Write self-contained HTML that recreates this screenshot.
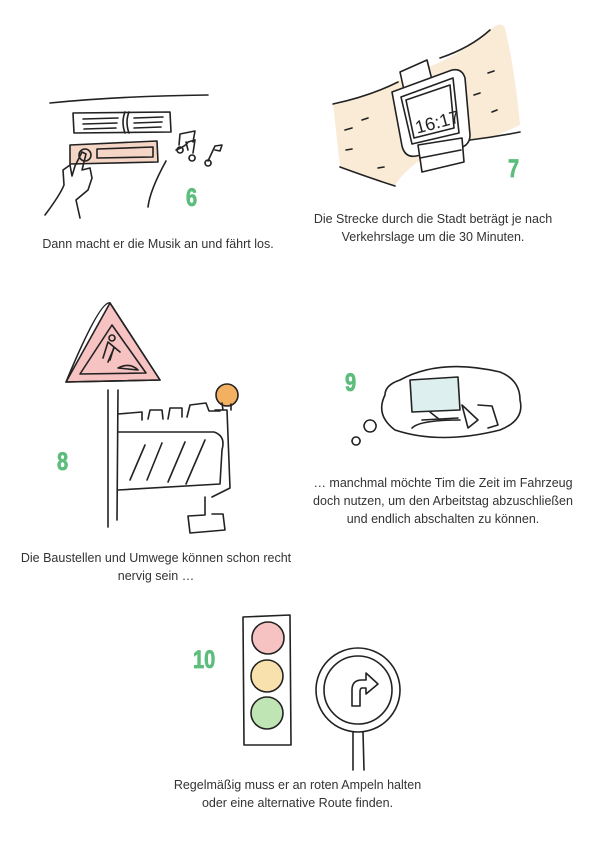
<!DOCTYPE html>
<html><head><meta charset="utf-8"><style>
body{margin:0;background:#fff;}
.p{position:relative;width:595px;height:842px;overflow:hidden;font-family:"Liberation Sans",sans-serif;}
.t{position:absolute;font-size:12.5px;color:#333;text-align:center;line-height:18px;white-space:nowrap;}
svg{position:absolute;left:0;top:0;}
.n{position:absolute;font-family:'Liberation Sans',sans-serif;font-weight:bold;color:#5dbd7c;font-size:25px;transform:scaleX(0.8);transform-origin:left top;-webkit-text-stroke:0.8px #5dbd7c;}
</style></head><body><div class="p">
<svg width="595" height="842" viewBox="0 0 595 842" fill="none" stroke="#222" stroke-width="1.6" stroke-linecap="round" stroke-linejoin="round">
<!-- 6 radio -->
<path d="M50 103 Q120 96 208 95"/>
<path d="M73 113 L170 112 L171 132 L74 133 Z"/>
<path d="M125 112 Q121 122 125 133 M129 112 Q125 122 129 133"/>
<path d="M83 119 L118 118 M83 124 L117 123 M84 129 L116 128 M134 118 L163 117 M134 123 L162 122 M134 128 L161 127"/>
<path d="M70 145 L157 141 L158 162 L70 164 Z" fill="#f5d6c6"/>
<path d="M97 149 L153 147 L153 157 L97 158 Z"/>
<circle cx="85" cy="155" r="6"/>
<path d="M45 215 Q60 195 64 185 L63 170 L70 165 L72 176 L75 166 L82 152 L86 154 L82 170 L90 168 L92 178 L88 190 L76 200 L80 218"/>
<path d="M166 161 Q150 190 148 207"/>
<path d="M176 150 Q186 146 188 142 L195 140 L193 153 M186 142 L188 150 M193 142 L195 131 L180 134 L179 145 M180 147 a3 3 0 1 0 0.1 0 M192 155 a3 3 0 1 0 0.1 0"/>
<path d="M208 161 L215 146 L222 145 L220 151 L215 150 M208 160 a3 3 0 1 0 0.1 0"/>
<!-- 7 watch -->
<path d="M333 104 Q370 96 400 80 L440 62 Q470 48 490 30 Q500 20 505 28 Q515 70 520 125 Q490 140 470 140 L420 160 Q400 175 395 186 Q365 178 340 167 Z" fill="#faebd6" stroke="none"/>
<path d="M333 104 Q370 96 398 82 M440 58 Q470 48 490 30 M340 167 Q370 178 395 186 M470 140 Q495 137 520 132"/>
<path d="M345 130 L352 128 M362 120 L368 118 M346 150 L352 149 M378 168 L384 167 M474 95 L480 93 M488 73 L494 71 M492 112 L497 110"/>
<path d="M400 72 L427 60 L432 80 L404 90 Z" fill="#fff"/>
<path d="M392 92 L452 70 Q462 68 465 78 L470 135 Q470 145 460 148 L416 156 Q405 158 402 146 Z" fill="#fff"/>
<path d="M401 97 L453 78 L459 133 L412 144 Z"/>
<path d="M406 100 L450 85 L454 128 L414 138 Z"/>
<path d="M418 145 L462 138 L464 162 L422 172 Z" fill="#fff"/>
<path d="M420 158 L461 150"/>
<text x="414" y="130" font-size="18" fill="#222" stroke="none" font-family="Liberation Sans Narrow, Liberation Sans" transform="rotate(-15 430 120)">16:17</text>
<!-- 8 construction -->
<path d="M110 303 L160 380 L66 382 Z" fill="#f6c2c2"/>
<path d="M110 303 Q100 300 66 382 M110 303 L160 380 L66 382"/>
<path d="M112 325 L146 373 L80 374 Z"/>
<path d="M103 358 L108 342 L114 347 L110 360 M108 342 L120 352 M114 348 L108 362 M118 368 Q130 362 138 370 Z"/>
<circle cx="112" cy="338" r="3"/>
<path d="M108 390 L108 527 M118 390 L117 520"/>
<path d="M118 414 L142 412 L142 420 M148 419 L150 410 L162 410 L163 419 M168 419 L170 408 L182 408 L182 417 M187 417 L190 405 L206 403 L209 411 L220 411"/>
<path d="M215 410 L227 410 L230 488 L212 497 M118 432 L214 432 Q226 436 222 450 L220 484 L118 490"/>
<path d="M130 480 L145 445 M147 480 L162 443 M168 482 L185 442 M186 484 L205 440"/>
<path d="M205 497 L205 515 L188 516 L190 533 L225 530 L223 514 L212 514"/>
<circle cx="227" cy="395" r="11" fill="#f2b060"/>
<path d="M222 403 L223 410 M231 404 L231 410"/>
<!-- 9 thought -->
<path d="M400 380 Q440 358 500 372 Q520 380 520 400 Q525 420 500 430 Q440 445 395 430 Q375 415 385 395 Q385 385 400 380 Z"/>
<path d="M370 420 a6 6 0 1 0 0.1 0 M356 437 a4 4 0 1 0 0.1 0"/>
<path d="M410 380 L458 377 L460 410 L412 412 Z" fill="#ddefee"/>
<path d="M430 412 L440 420 M422 420 L458 418 M412 428 Q420 420 460 420 M462 405 L478 420 L468 428 Z M478 405 L492 406 L498 425 L488 428"/>
<!-- 10 lights -->
<path d="M243 617 L290 615 L291 745 L244 745 Z"/>
<circle cx="268" cy="638" r="16" fill="#f6c2c2"/>
<circle cx="267" cy="676" r="16" fill="#f9e1ad"/>
<circle cx="267" cy="713" r="16" fill="#bfe5b4"/>
<circle cx="358" cy="690" r="42"/>
<circle cx="358" cy="690" r="34"/>
<path d="M352 706 L352 690 Q352 680 362 680 L366 680 L366 673 L378 684 L366 694 L366 688 L362 688 Q360 688 360 692 L360 706 Z"/>
<path d="M353 732 L353 770 M363 732 L364 770"/>
</svg>
<span class="n" style="left:186px;top:184px">6</span>
<span class="n" style="left:508px;top:155px">7</span>
<span class="n" style="left:57px;top:448px">8</span>
<span class="n" style="left:345px;top:369px">9</span>
<span class="n" style="left:193px;top:646px">10</span>
<div class="t" style="left:0;width:316px;top:235px">Dann macht er die Musik an und fährt los.</div>
<div class="t" style="left:300px;width:266px;top:210px">Die Strecke durch die Stadt beträgt je nach<br>Verkehrslage um die 30 Minuten.</div>
<div class="t" style="left:0;width:312px;top:549px">Die Baustellen und Umwege können schon recht<br>nervig sein …</div>
<div class="t" style="left:310px;width:266px;top:474px">… manchmal möchte Tim die Zeit im Fahrzeug<br>doch nutzen, um den Arbeitstag abzuschließen<br>und endlich abschalten zu können.</div>
<div class="t" style="left:0;width:595px;top:776px">Regelmäßig muss er an roten Ampeln halten<br>oder eine alternative Route finden.</div>
</div></body></html>
